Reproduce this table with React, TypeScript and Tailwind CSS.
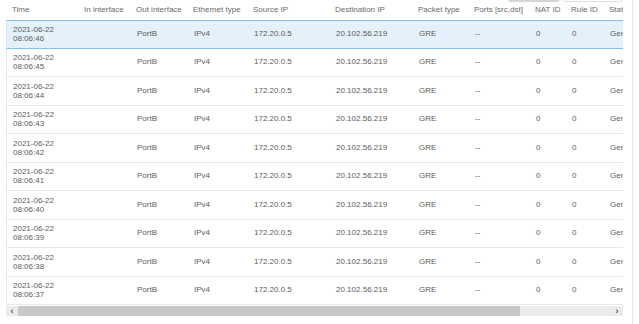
import React from 'react';

const cols = [
  { key: 'time', label: 'Time', w: 'w-[72px]' },
  { key: 'in', label: 'In interface', w: 'w-[52px]' },
  { key: 'out', label: 'Out interface', w: 'w-[57px]' },
  { key: 'eth', label: 'Ethernet type', w: 'w-[60px]' },
  { key: 'src', label: 'Source IP', w: 'w-[82px]' },
  { key: 'dst', label: 'Destination IP', w: 'w-[83px]' },
  { key: 'pkt', label: 'Packet type', w: 'w-[56px]' },
  { key: 'ports', label: 'Ports [src,dst]', w: 'w-[61px]' },
  { key: 'nat', label: 'NAT ID', w: 'w-[36px]' },
  { key: 'rule', label: 'Rule ID', w: 'w-[38px]' },
  { key: 'status', label: 'Status', w: 'w-[90px]' },
];

const seconds = ['46', '45', '44', '43', '42', '41', '40', '39', '38', '37'];

export default function App() {
  return (
    <div
      className="relative w-[639px] h-[324px] bg-white overflow-hidden text-[8px] text-[#5c5c5c]"
      style={{ fontFamily: '"Liberation Sans", Arial, sans-serif' }}
    >
      {/* partial buttons above */}
      <div className="absolute left-[508px] top-[-6px] w-[52px] h-[8px] rounded-[3px] bg-[#d4d4d4]" />
      <div className="absolute left-[563px] top-[-6px] w-[60px] h-[8px] rounded-[3px] border border-[#dedede] bg-white" />
      {/* page scroll track */}
      <div className="absolute left-[632px] top-0 h-full w-[7px] border-l border-[#e6e6e6] bg-[#fcfcfc]" />

      <div className="ml-[6px] w-[617px] overflow-hidden">
        <div className="w-[800px]">
          {/* Header */}
          <div className="flex h-[20px] items-center text-[#6a6a6a]">
            {cols.map((c) => (
              <div key={c.key} className={`${c.w} shrink-0 px-[6px] whitespace-nowrap`}>
                {c.label}
              </div>
            ))}
          </div>

          {seconds.map((s, i) => {
            const selected = i === 0;
            return (
              <div
                key={s}
                className={
                  selected
                    ? 'flex h-[28.5px] items-center bg-[#e4f0fa] border-y border-l border-[#86c0e9] border-l-[#d8e6f2]'
                    : 'flex h-[28.5px] items-center border-l border-b border-[#e8e8e8]'
                }
              >
                <div className="w-[72px] shrink-0 px-[6px] leading-[9px]">
                  <div>2021-06-22</div>
                  <div>08:06:{s}</div>
                </div>
                <div className="w-[52px] shrink-0 px-[6px]" />
                <div className="w-[57px] shrink-0 px-[6px]">PortB</div>
                <div className="w-[60px] shrink-0 px-[6px]">IPv4</div>
                <div className="w-[82px] shrink-0 px-[6px]">172.20.0.5</div>
                <div className="w-[83px] shrink-0 px-[6px]">20.102.56.219</div>
                <div className="w-[56px] shrink-0 px-[6px]">GRE</div>
                <div className="w-[61px] shrink-0 px-[6px]">--</div>
                <div className="w-[36px] shrink-0 px-[6px]">0</div>
                <div className="w-[38px] shrink-0 px-[6px]">0</div>
                <div className="w-[90px] shrink-0 px-[6px] whitespace-nowrap">Generated</div>
              </div>
            );
          })}
        </div>

        {/* horizontal scrollbar */}
        <div className="mt-[1px] flex h-[10px] items-center bg-[#ebebeb]">
          <div className="flex w-[12px] items-center justify-center text-[9px] font-bold leading-none text-[#555]">‹</div>
          <div className="h-full w-[502px] bg-[#c8c8c8]" />
          <div className="flex-1" />
          <div className="flex w-[12px] items-center justify-center text-[9px] font-bold leading-none text-[#555]">›</div>
        </div>
      </div>
    </div>
  );
}
